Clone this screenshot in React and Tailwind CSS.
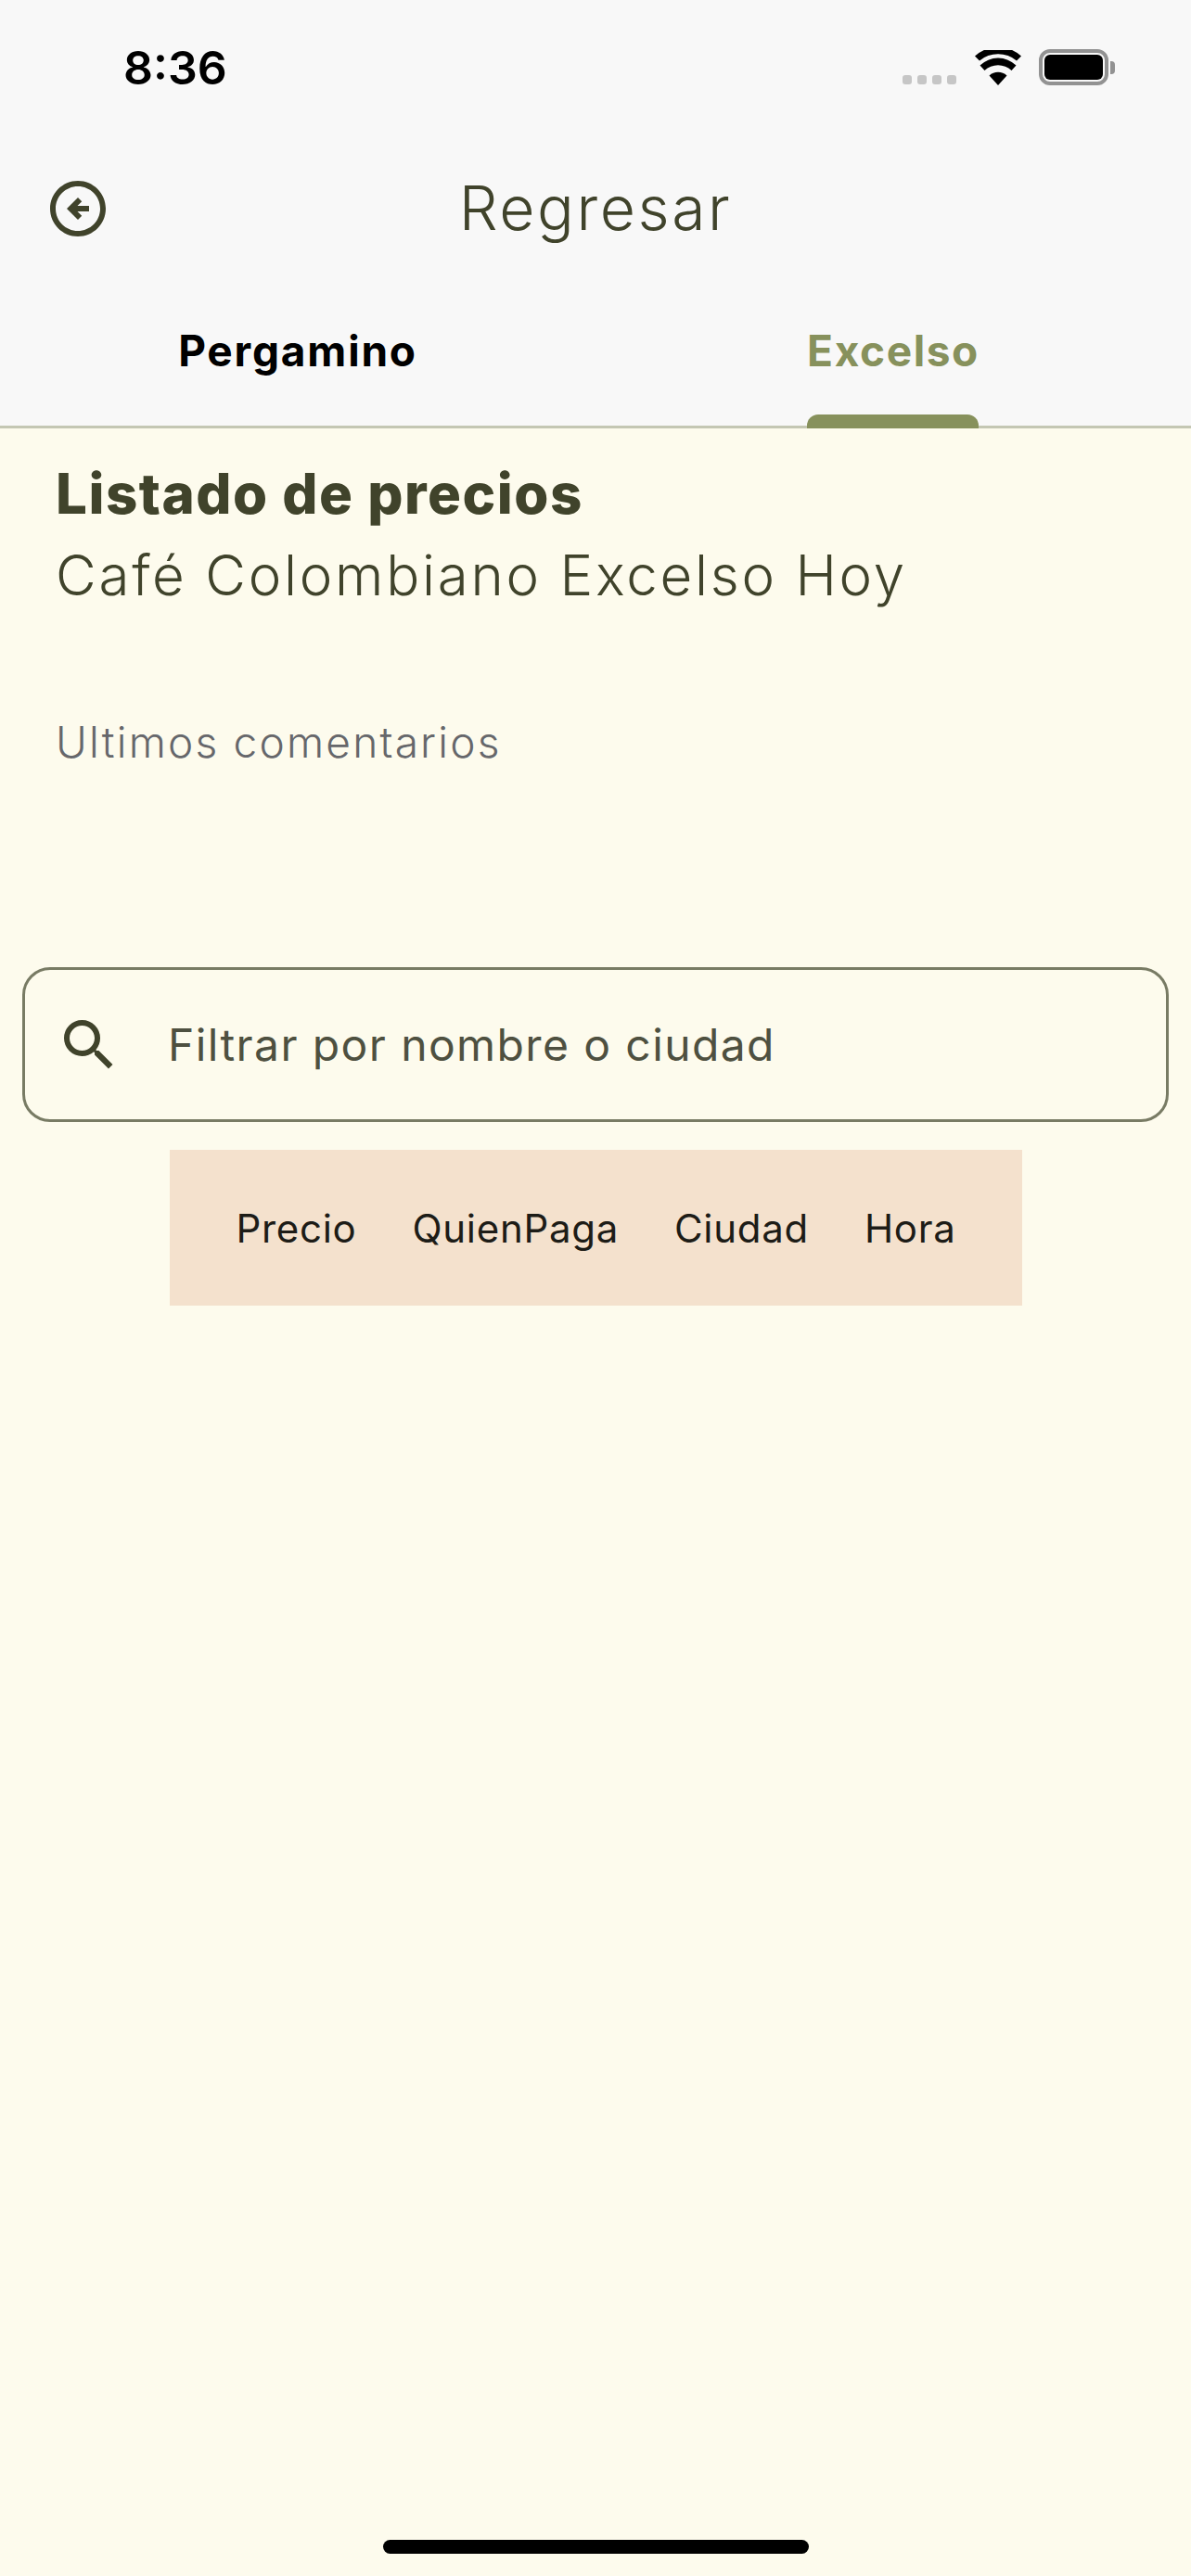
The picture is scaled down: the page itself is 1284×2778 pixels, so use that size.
import React from 'react';

const poppins = "font-['Inter',sans-serif]";

function StatusIcons() {
  return (
    <div className="flex items-start">
      <div className="mt-[81px] flex gap-[6px]">
        {[0, 1, 2, 3].map((i) => (
          <div key={i} className="h-[10px] w-[10px] rounded-[3px] bg-[#c6c6c6]" />
        ))}
      </div>
      <svg className="ml-[20px] mt-[54px]" width="50" height="38" viewBox="0 0 50 38">
        <path d="M25 38 L15.5 27.5 A14 14 0 0 1 34.5 27.5 Z" fill="#000" />
        <path d="M10.5 22 L5.5 16.5 A28 28 0 0 1 44.5 16.5 L39.5 22 A21 21 0 0 0 10.5 22 Z" fill="#000" />
        <path d="M5 11.5 L0 6.5 A37 37 0 0 1 50 6.5 L45 11.5 A31 31 0 0 0 5 11.5 Z" fill="#000" />
      </svg>
      <div className="ml-[19px] mt-[53px] flex h-[39px] w-[75px] rounded-[12px] border-[4px] border-[#929292] p-[2px]">
        <div className="flex-1 rounded-[6px] bg-black" />
      </div>
      <div className="ml-[2px] mt-[66px] h-[14px] w-[5px] rounded-r-[4px] bg-[#929292]" />
    </div>
  );
}

export default function App() {
  return (
    <div className={`flex h-[2778px] w-[1284px] flex-col overflow-hidden bg-[#fdfbed] ${poppins}`}>
      <header className="relative border-b-[3px] border-[#c4c7b3] bg-[#f8f8f8]">
        <div className="flex h-[140px] justify-between pl-[133px] pr-[82px]">
          <div className="mt-[43px] text-[50px] font-semibold leading-[60px] text-black">8:36</div>
          <StatusIcons />
        </div>

        <div className="relative flex h-[168px] items-center justify-center">
          <svg className="absolute left-[48px] top-[49px]" width="72" height="72" viewBox="0 0 24 24" fill="#40432b">
            <path d="M2 12c0 5.52 4.48 10 10 10s10-4.48 10-10S17.52 2 12 2 2 6.48 2 12zm18 0c0 4.42-3.58 8-8 8s-8-3.58-8-8 3.58-8 8-8 8 3.58 8 8zM8 12l4 4 1.41-1.41L11.83 13H16v-2h-4.17l1.59-1.59L12 8l-4 4z" />
          </svg>
          <h1 className="text-[66px] font-light leading-none tracking-[2.6px] text-[#40432b]">Regresar</h1>
        </div>

        <div className="grid h-[151px] grid-cols-2 pb-[11px]">
          <div className="flex items-center justify-center text-[46px] font-bold tracking-[1.8px] text-black">Pergamino</div>
          <div className="flex items-center justify-center text-[46px] font-bold tracking-[1.6px] text-[#87915c]">Excelso</div>
        </div>
        <div className="absolute bottom-[-3px] left-[870px] h-[15px] w-[185px] rounded-t-[12px] bg-[#87915c]" />
      </header>

      <main className="flex flex-1 flex-col">
        <section className="pl-[60px] pt-[34px] text-[#40432b]">
          <h2 className="text-[60px] font-extrabold leading-[72px] tracking-[1.5px]">Listado de precios</h2>
          <p className="mt-[16px] text-[60px] font-light leading-[72px] tracking-[2.75px]">Café Colombiano Excelso Hoy</p>
          <p className="mt-[116px] text-[46px] font-light leading-[56px] tracking-[2.2px] text-[#66676b]">Ultimos comentarios</p>
        </section>

        <div className="mx-[24px] mt-[215px] flex h-[167px] items-center rounded-[30px] border-[3px] border-[#787b64] pl-[33px]">
          <svg width="72" height="72" viewBox="0 0 24 24" fill="#40432b">
            <path d="M15.5 14h-.79l-.28-.27A6.471 6.471 0 0 0 16 9.5 6.5 6.5 0 1 0 9.5 16c1.61 0 3.09-.59 4.23-1.57l.27.28v.79l5 4.99L20.49 19l-4.99-5zm-6 0C7.01 14 5 11.99 5 9.5S7.01 5 9.5 5 14 7.01 14 9.5 11.99 14 9.5 14z" />
          </svg>
          <span className="ml-[49px] text-[48px] tracking-[1.4px] text-[#4e5040]">Filtrar por nombre o ciudad</span>
        </div>

        <div className="mt-[30px] flex h-[168px] w-[919px] items-center gap-[60px] self-center bg-[#f4e1cd] pl-[72px] text-[42px] tracking-[0.7px] text-[#1d1c17]">
          <span>Precio</span>
          <span>QuienPaga</span>
          <span>Ciudad</span>
          <span>Hora</span>
        </div>

        <div className="mb-[24px] mt-auto h-[15px] w-[459px] self-center rounded-full bg-black" />
      </main>
    </div>
  );
}
